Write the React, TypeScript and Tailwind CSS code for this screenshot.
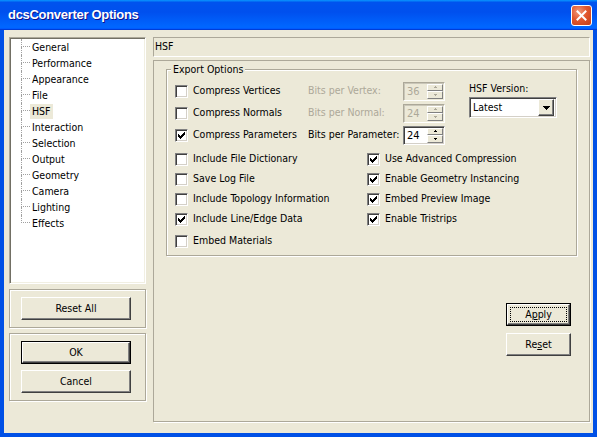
import React from 'react'

const TREE = ['General', 'Performance', 'Appearance', 'File', 'HSF', 'Interaction', 'Selection', 'Output', 'Geometry', 'Camera', 'Lighting', 'Effects']

// classic 7x7 check mark, one 3px column per x
function CheckMark() {
  const ys = [2, 3, 4, 3, 2, 1, 0]
  return (
    <svg width="7" height="7" viewBox="0 0 7 7" shapeRendering="crispEdges">
      {ys.map((y, x) => (
        <rect key={x} x={x} y={y} width="1" height="3" fill="black" />
      ))}
    </svg>
  )
}

function Check({ checked }: { checked?: boolean }) {
  return (
    <span className="w-[13px] h-[13px] shrink-0 bg-white border border-t-[#808080] border-l-[#808080] border-r-white border-b-white shadow-[inset_1px_1px_0_#404040,inset_-1px_-1px_0_#d4d0c8] flex items-center justify-center">
      {checked && <CheckMark />}
    </span>
  )
}

function Arrow({ up, color }: { up?: boolean; color: string }) {
  return (
    <svg width="5" height="3" viewBox="0 0 5 3" shapeRendering="crispEdges">
      {up ? (
        <>
          <rect x="2" y="0" width="1" height="1" fill={color} />
          <rect x="1" y="1" width="3" height="1" fill={color} />
        </>
      ) : (
        <>
          <rect x="1" y="1" width="3" height="1" fill={color} />
          <rect x="2" y="2" width="1" height="1" fill={color} />
        </>
      )}
    </svg>
  )
}

function Spinner({ value, disabled }: { value: string; disabled?: boolean }) {
  return (
    <div
      className={`w-[42px] h-[19px] flex border ${
        disabled
          ? 'bg-[#ece9d8] border-t-[#aca899] border-l-[#aca899] border-r-white border-b-white shadow-[inset_1px_1px_0_#c9c6b8]'
          : 'bg-white border-t-[#808080] border-l-[#808080] border-r-white border-b-white shadow-[inset_1px_1px_0_#404040,inset_-1px_-1px_0_#d4d0c8]'
      }`}
    >
      <span className={`flex-1 pl-[3px] pt-[2px] text-[11px] leading-[13px] ${disabled ? 'text-[#aca899]' : 'text-black'}`}>{value}</span>
      <div className="w-[16px] flex flex-col my-[1px] mr-[1px]">
        <div className="flex-1 flex items-center justify-center bg-[#ece9d8] border border-t-white border-l-white border-r-[#808080] border-b-[#808080]">
          <Arrow up color={disabled ? '#aca899' : 'black'} />
        </div>
        <div className="flex-1 flex items-center justify-center bg-[#ece9d8] border border-t-white border-l-white border-r-[#808080] border-b-[#808080]">
          <Arrow color={disabled ? '#aca899' : 'black'} />
        </div>
      </div>
    </div>
  )
}

function Button({ label, isDefault, focused, w = 'w-[110px]' }: { label: React.ReactNode; isDefault?: boolean; focused?: boolean; w?: string }) {
  return (
    <div className={`${w} h-[23px] ${isDefault ? 'border border-black' : ''}`}>
      <div className="w-full h-full bg-[#ece9d8] border border-t-white border-l-white border-r-[#404040] border-b-[#404040] shadow-[inset_-1px_-1px_0_#808080] flex items-center justify-center p-[2px]">
        {focused ? (
          <span className="w-full h-full border border-dotted border-black flex items-center justify-center">{label}</span>
        ) : (
          label
        )}
      </div>
    </div>
  )
}

function Row({ children, className = '' }: { children: React.ReactNode; className?: string }) {
  return <div className={`flex items-center ${className}`}>{children}</div>
}

function CheckItem({ label, checked }: { label: string; checked?: boolean }) {
  return (
    <div className="flex items-center gap-[5px]">
      <Check checked={checked} />
      <span>{label}</span>
    </div>
  )
}

export default function App() {
  return (
    <div className="w-[597px] h-[437px] flex flex-col bg-[#0050e6] font-['DejaVu_Sans_Condensed','Liberation_Sans',sans-serif] text-[10.5px] text-black overflow-hidden select-none">
      {/* Title bar */}
      <div className="h-[30px] shrink-0 flex items-center justify-between pl-[8px] pr-[5px] bg-[linear-gradient(180deg,#0997ff,#0053ee_8%,#0050ee_40%,#0066ff_88%,#0066ff_93%,#005bff_95%,#003dd7_96%,#003dd7)]">
        <span className="text-white font-bold text-[13px] tracking-[-0.3px] font-['Liberation_Sans',sans-serif] [text-shadow:1px_1px_#0f1089]">dcsConverter Options</span>
        <div className="w-[21px] h-[21px] rounded-[3px] border border-white bg-[radial-gradient(circle_at_35%_30%,#f09a7c,#e2582f_45%,#c43d17)] flex items-center justify-center">
          <svg width="11" height="11" viewBox="0 0 11 11">
            <path d="M1.5 1.5 L9.5 9.5 M9.5 1.5 L1.5 9.5" stroke="white" strokeWidth="2" strokeLinecap="square" />
          </svg>
        </div>
      </div>

      {/* Client */}
      <div className="flex-1 mx-[4px] mb-[4px] bg-[#ece9d8] flex gap-[7px] pl-[5px] pt-[7px]">
        {/* Left column */}
        <div className="w-[137px] flex flex-col gap-[5px]">
          <div className="h-[247px] bg-white border border-t-[#aca899] border-l-[#aca899] border-r-white border-b-white shadow-[inset_1px_1px_0_#716f64,inset_-1px_-1px_0_#f1efe2] pl-[11px] pt-[1px]">
            {TREE.map((t, i) => {
              const last = i === TREE.length - 1
              return (
                <div key={t} className="flex h-[16px]">
                  <div className="w-[9px] shrink-0 flex flex-col">
                    <div className="h-[8px] border-l border-b border-dotted border-[#a0a0a0]" />
                    <div className={`flex-1 ${last ? '' : 'border-l border-dotted border-[#a0a0a0]'}`} />
                  </div>
                  <span className={`px-[2px] h-[15px] leading-[15px] mt-[1px] ${t === 'HSF' ? 'bg-[#ece9d8]' : ''}`}>{t}</span>
                </div>
              )
            })}
          </div>

          <div className="h-[39px] border border-[#aca899] shadow-[inset_1px_1px_0_white,1px_1px_0_white] pl-[11px] pt-[7px]">
            <Button label="Reset All" />
          </div>

          <div className="h-[68px] border border-[#aca899] shadow-[inset_1px_1px_0_white,1px_1px_0_white] pl-[11px] pt-[7px] flex flex-col gap-[6px]">
            <Button label="OK" isDefault />
            <Button label="Cancel" />
          </div>
        </div>

        {/* Right column */}
        <div className="w-[437px] flex flex-col gap-[3px]">
          <div className="h-[20px] border border-t-[#aca899] border-l-[#aca899] border-r-white border-b-white pl-[1px] flex items-center">
            HSF
          </div>

          <div className="h-[362px] border border-[#aca899] shadow-[1px_1px_0_white] flex flex-col pl-[12px] pt-[8px]">
            {/* Export Options group */}
            <div className="relative w-[411px] h-[187px] border border-[#aca899] shadow-[inset_1px_1px_0_white,1px_1px_0_white] pl-[8px] pt-[10px]">
              <span className="absolute -top-[7px] left-[4px] px-[2px] bg-[#ece9d8] leading-[13px]">Export Options</span>

              <div className="flex">
                <div className="flex flex-col">
                  <Row className="h-[22px]">
                    <div className="w-[133px]"><CheckItem label="Compress Vertices" /></div>
                    <span className="w-[95px] text-[#aca899]">Bits per Vertex:</span>
                    <Spinner value="36" disabled />
                  </Row>
                  <Row className="h-[22px]">
                    <div className="w-[133px]"><CheckItem label="Compress Normals" /></div>
                    <span className="w-[95px] text-[#aca899]">Bits per Normal:</span>
                    <Spinner value="24" disabled />
                  </Row>
                  <Row className="h-[22px]">
                    <div className="w-[133px]"><CheckItem label="Compress Parameters" checked /></div>
                    <span className="w-[95px] whitespace-nowrap">Bits per Parameter:</span>
                    <Spinner value="24" />
                  </Row>
                </div>

                <div className="ml-[24px] pt-[1px] flex flex-col">
                  <span className="h-[14px] leading-[14px]">HSF Version:</span>
                  <div className="mt-[2px] w-[88px] h-[21px] bg-white border border-t-[#808080] border-l-[#808080] border-r-white border-b-white shadow-[inset_1px_1px_0_#404040,inset_-1px_-1px_0_#d4d0c8] flex items-center">
                    <span className="flex-1 pl-[3px]">Latest</span>
                    <div className="w-[16px] h-[17px] mr-[2px] bg-[#ece9d8] border border-t-white border-l-white border-r-[#404040] border-b-[#404040] shadow-[inset_-1px_-1px_0_#808080] flex items-center justify-center">
                      <svg width="7" height="4" viewBox="0 0 7 4" shapeRendering="crispEdges">
                        <path d="M0 0 H7 V1 H6 V2 H5 V3 H4 V4 H3 V3 H2 V2 H1 V1 H0 Z" fill="black" />
                      </svg>
                    </div>
                  </div>
                </div>
              </div>

              <div className="mt-[3px] grid grid-cols-[192px_1fr] auto-rows-[20px] items-center">
                <CheckItem label="Include File Dictionary" />
                <CheckItem label="Use Advanced Compression" checked />
                <CheckItem label="Save Log File" />
                <CheckItem label="Enable Geometry Instancing" checked />
                <CheckItem label="Include Topology Information" />
                <CheckItem label="Embed Preview Image" checked />
                <CheckItem label="Include Line/Edge Data" checked />
                <CheckItem label="Enable Tristrips" checked />
              </div>
              <Row className="mt-[2px] h-[20px]">
                <CheckItem label="Embed Materials" />
              </Row>
            </div>

            <div className="self-end mr-[18px] mt-[47px] flex flex-col gap-[7px]">
              <Button w="w-[65px]" isDefault focused label={<span>A<span className="underline">p</span>ply</span>} />
              <Button w="w-[65px]" label={<span>Re<span className="underline">s</span>et</span>} />
            </div>
          </div>
        </div>
      </div>
    </div>
  )
}
